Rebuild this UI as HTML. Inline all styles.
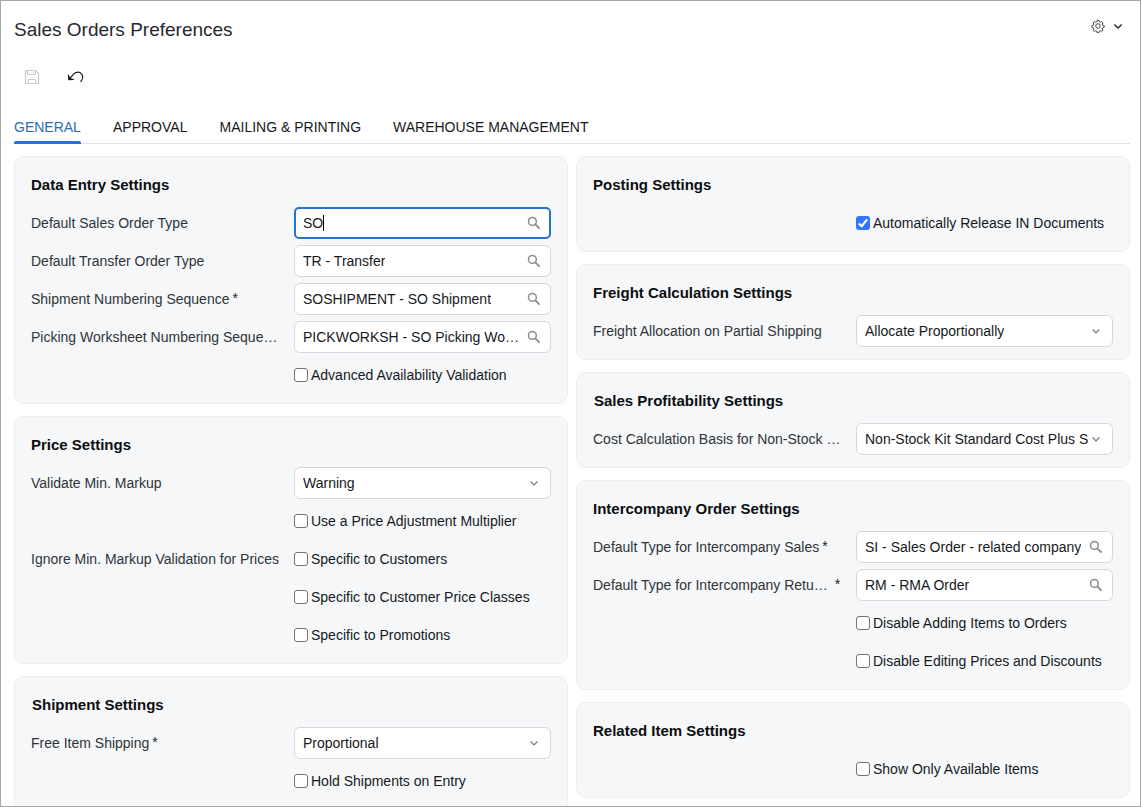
<!DOCTYPE html>
<html><head><meta charset="utf-8"><title>Sales Orders Preferences</title>
<style>
*{box-sizing:border-box;margin:0;padding:0}
html,body{width:1141px;height:807px;overflow:hidden;background:#fff}
body{font-family:"Liberation Sans",sans-serif;font-size:14px;color:#1f2328;position:relative}
#frame{position:absolute;left:0;top:0;width:1141px;height:807px;border:1px solid #a6a6a6;pointer-events:none;z-index:10}
#clip{position:absolute;left:0;top:0;width:1141px;height:806px;overflow:hidden}
h1{position:absolute;left:14px;top:19px;font-size:19px;font-weight:normal;line-height:22px;color:#25292e;white-space:nowrap}
.tab{position:absolute;top:119px;font-size:14px;line-height:16px;color:#16191c;white-space:nowrap}
.tab.act{color:#2a6ebb}
#tabline{position:absolute;left:14px;top:143px;width:1116px;height:1px;background:#dfe1e4}
#tabbar{position:absolute;left:14px;top:141px;width:67px;height:3px;background:#2374cb;border-radius:2px 2px 0 0}
.panel{position:absolute;width:554px;background:#f5f7f9;border:1px solid #eceef0;border-radius:10px;padding:9px 16px 0 16px}
.row{height:38px;display:flex;align-items:center}
.ttl{font-weight:bold;font-size:15px;color:#0c0e10;white-space:nowrap;position:relative;top:-1px}
.lbl{width:263px;flex:none;color:#303438;white-space:nowrap;display:flex;align-items:center}
.req{margin-left:3px;color:#1d2024;position:relative;top:-1px}
.req.far{margin-left:7px}
.inp{width:257px;height:32px;flex:none;background:#fff;border:1px solid #d5d8dc;border-radius:6px;position:relative;display:flex;align-items:center;padding-left:8px}
.inp.focus{border:2px solid #2374cb;padding-left:7px;border-radius:5px}
.inp .v{white-space:nowrap;color:#16191c;overflow:hidden;display:inline-flex;align-items:center}
.caret{display:inline-block;width:1px;height:16px;background:#000;margin-left:0}
.ico{position:absolute}
.ico.s{right:9px;top:8px}
.inp.focus .ico.s{right:8px;top:7px}
.ico.c{right:11px;top:12px}
.cbw{display:flex;align-items:center;white-space:nowrap}
.cb{display:inline-block;width:14px;height:14px;border:1px solid #737373;border-radius:3px;background:#fff;flex:none;margin-right:3px}
.cb.on{border:none;background:#3177fd}
.cb.on svg{display:block}
.cbt{color:#16191c}
</style></head><body>
<div id="clip">
<h1>Sales Orders Preferences</h1>
<svg style="position:absolute;left:24px;top:69px" width="16" height="16" viewBox="0 0 16 16"><path d="M2.5 1.5 H11.5 L14.5 4.5 V13.5 Q14.5 14.5 13.5 14.5 H2.5 Q1.5 14.5 1.5 13.5 V2.5 Q1.5 1.5 2.5 1.5 Z" fill="none" stroke="#cbcbcc" stroke-width="1.2"/><path d="M3.5 1.5 V5.5 H11.5 V1.5" fill="none" stroke="#cbcbcc" stroke-width="1.1"/><path d="M4.5 14.5 V10.5 H11.5 V14.5" fill="none" stroke="#cbcbcc" stroke-width="1.1"/><rect x="8.6" y="2.6" width="1.4" height="1.4" fill="#d6d8da"/></svg>
<svg style="position:absolute;left:66px;top:68px" width="20" height="18" viewBox="0 0 20 18"><path d="M3.2 11.2 L7.6 6.2 C10 3.5 13.6 3.4 15.5 5.8 C17.4 8.3 16.8 11.6 14.4 13.8" fill="none" stroke="#15171a" stroke-width="1.25"/><path d="M2.4 6.8 L2.9 11.6 L7.8 11.3" fill="none" stroke="#15171a" stroke-width="1.25"/><path d="M2.9 11.6 L2.6 8.6 L4.6 9 L6 11.4 Z" fill="#15171a"/></svg>
<svg style="position:absolute;left:1091px;top:18.7px" width="14" height="14" viewBox="0 0 16 16"><g fill="none" stroke="#3a3d41" stroke-width="1.1"><circle cx="8" cy="8" r="2.6"/><path d="M6.9 1.5 h2.2 l.35 1.7 l1.25 .55 l1.5 -.95 l1.55 1.55 l-.95 1.5 l.55 1.25 l1.7 .35 v2.2 l-1.7 .35 l-.55 1.25 l.95 1.5 l-1.55 1.55 l-1.5 -.95 l-1.25 .55 l-.35 1.7 h-2.2 l-.35 -1.7 l-1.25 -.55 l-1.5 .95 l-1.55 -1.55 l.95 -1.5 l-.55 -1.25 l-1.7 -.35 v-2.2 l1.7 -.35 l.55 -1.25 l-.95 -1.5 l1.55 -1.55 l1.5 .95 l1.25 -.55 z" stroke-linejoin="round"/></g></svg>
<svg style="position:absolute;left:1112px;top:22px" width="12" height="9" viewBox="0 0 12 9"><path d="M2.3 2.4 L6 6.1 L9.7 2.4" fill="none" stroke="#24272a" stroke-width="1.4"/></svg>
<div class="tab act" style="left:14px">GENERAL</div>
<div class="tab" style="left:113px">APPROVAL</div>
<div class="tab" style="left:219.5px">MAILING &amp; PRINTING</div>
<div class="tab" style="left:393px">WAREHOUSE MANAGEMENT</div>
<div id="tabline"></div><div id="tabbar"></div>
<div class="panel " style="left:14px;top:156px;height:248px"><div class="row"><div class="ttl">Data Entry Settings</div></div><div class="row"><div class="lbl"><span class="lt">Default Sales Order Type</span></div><div class="inp focus "><span class="v">SO<span class="caret"></span></span><svg class="ico s" viewBox="0 0 14 14" width="14" height="14"><circle cx="5.4" cy="5.4" r="3.9" fill="none" stroke="#8a8d91" stroke-width="1.5"/><path d="M8.3 8.3 L12.6 12.6" stroke="#8a8d91" stroke-width="1.8" fill="none"/></svg></div></div><div class="row"><div class="lbl"><span class="lt">Default Transfer Order Type</span></div><div class="inp "><span class="v">TR - Transfer</span><svg class="ico s" viewBox="0 0 14 14" width="14" height="14"><circle cx="5.4" cy="5.4" r="3.9" fill="none" stroke="#8a8d91" stroke-width="1.5"/><path d="M8.3 8.3 L12.6 12.6" stroke="#8a8d91" stroke-width="1.8" fill="none"/></svg></div></div><div class="row"><div class="lbl"><span class="lt">Shipment Numbering Sequence</span><span class="req">*</span></div><div class="inp "><span class="v">SOSHIPMENT - SO Shipment</span><svg class="ico s" viewBox="0 0 14 14" width="14" height="14"><circle cx="5.4" cy="5.4" r="3.9" fill="none" stroke="#8a8d91" stroke-width="1.5"/><path d="M8.3 8.3 L12.6 12.6" stroke="#8a8d91" stroke-width="1.8" fill="none"/></svg></div></div><div class="row"><div class="lbl"><span class="lt">Picking Worksheet Numbering Seque…</span></div><div class="inp "><span class="v">PICKWORKSH - SO Picking Wo…</span><svg class="ico s" viewBox="0 0 14 14" width="14" height="14"><circle cx="5.4" cy="5.4" r="3.9" fill="none" stroke="#8a8d91" stroke-width="1.5"/><path d="M8.3 8.3 L12.6 12.6" stroke="#8a8d91" stroke-width="1.8" fill="none"/></svg></div></div><div class="row"><div class="lbl"></div><div class="cbw"><span class="cb"></span><span class="cbt">Advanced Availability Validation</span></div></div></div><div class="panel " style="left:14px;top:416px;height:248px"><div class="row"><div class="ttl">Price Settings</div></div><div class="row"><div class="lbl"><span class="lt">Validate Min. Markup</span></div><div class="inp "><span class="v">Warning</span><svg class="ico c" viewBox="0 0 10 7" width="10" height="7"><path d="M1.6 1.5 L5 5 L8.4 1.5" stroke="#76797d" stroke-width="1.2" fill="none"/></svg></div></div><div class="row"><div class="lbl"></div><div class="cbw"><span class="cb"></span><span class="cbt">Use a Price Adjustment Multiplier</span></div></div><div class="row"><div class="lbl"><span class="lt">Ignore Min. Markup Validation for Prices</span></div><div class="cbw"><span class="cb"></span><span class="cbt">Specific to Customers</span></div></div><div class="row"><div class="lbl"></div><div class="cbw"><span class="cb"></span><span class="cbt">Specific to Customer Price Classes</span></div></div><div class="row"><div class="lbl"></div><div class="cbw"><span class="cb"></span><span class="cbt">Specific to Promotions</span></div></div></div><div class="panel " style="left:14px;top:676px;height:200px"><div class="row"><div class="ttl" style="left:1px">Shipment Settings</div></div><div class="row"><div class="lbl"><span class="lt">Free Item Shipping</span><span class="req">*</span></div><div class="inp "><span class="v">Proportional</span><svg class="ico c" viewBox="0 0 10 7" width="10" height="7"><path d="M1.6 1.5 L5 5 L8.4 1.5" stroke="#76797d" stroke-width="1.2" fill="none"/></svg></div></div><div class="row"><div class="lbl"></div><div class="cbw"><span class="cb"></span><span class="cbt">Hold Shipments on Entry</span></div></div></div>
<div class="panel r" style="left:576px;top:156px;height:96px"><div class="row"><div class="ttl">Posting Settings</div></div><div class="row"><div class="lbl"></div><div class="cbw"><span class="cb on"><svg viewBox="0 0 13 13" width="14" height="14"><path d="M2.6 6.9 L5.3 9.5 L10.4 3.2" stroke="#fff" stroke-width="2" fill="none"/></svg></span><span class="cbt">Automatically Release IN Documents</span></div></div></div><div class="panel r" style="left:576px;top:264px;height:96px"><div class="row"><div class="ttl">Freight Calculation Settings</div></div><div class="row"><div class="lbl"><span class="lt">Freight Allocation on Partial Shipping</span></div><div class="inp "><span class="v">Allocate Proportionally</span><svg class="ico c" viewBox="0 0 10 7" width="10" height="7"><path d="M1.6 1.5 L5 5 L8.4 1.5" stroke="#76797d" stroke-width="1.2" fill="none"/></svg></div></div></div><div class="panel r" style="left:576px;top:372px;height:96px"><div class="row"><div class="ttl" style="left:1px">Sales Profitability Settings</div></div><div class="row"><div class="lbl"><span class="lt">Cost Calculation Basis for Non-Stock …</span></div><div class="inp tight"><span class="v">Non-Stock Kit Standard Cost Plus S</span><svg class="ico c" viewBox="0 0 10 7" width="10" height="7"><path d="M1.6 1.5 L5 5 L8.4 1.5" stroke="#76797d" stroke-width="1.2" fill="none"/></svg></div></div></div><div class="panel r" style="left:576px;top:480px;height:210px"><div class="row"><div class="ttl">Intercompany Order Settings</div></div><div class="row"><div class="lbl"><span class="lt">Default Type for Intercompany Sales</span><span class="req">*</span></div><div class="inp "><span class="v">SI - Sales Order - related company</span><svg class="ico s" viewBox="0 0 14 14" width="14" height="14"><circle cx="5.4" cy="5.4" r="3.9" fill="none" stroke="#8a8d91" stroke-width="1.5"/><path d="M8.3 8.3 L12.6 12.6" stroke="#8a8d91" stroke-width="1.8" fill="none"/></svg></div></div><div class="row"><div class="lbl"><span class="lt">Default Type for Intercompany Retu…</span><span class="req far">*</span></div><div class="inp "><span class="v">RM - RMA Order</span><svg class="ico s" viewBox="0 0 14 14" width="14" height="14"><circle cx="5.4" cy="5.4" r="3.9" fill="none" stroke="#8a8d91" stroke-width="1.5"/><path d="M8.3 8.3 L12.6 12.6" stroke="#8a8d91" stroke-width="1.8" fill="none"/></svg></div></div><div class="row"><div class="lbl"></div><div class="cbw"><span class="cb"></span><span class="cbt">Disable Adding Items to Orders</span></div></div><div class="row"><div class="lbl"></div><div class="cbw"><span class="cb"></span><span class="cbt">Disable Editing Prices and Discounts</span></div></div></div><div class="panel r" style="left:576px;top:702px;height:96px"><div class="row"><div class="ttl">Related Item Settings</div></div><div class="row"><div class="lbl"></div><div class="cbw"><span class="cb"></span><span class="cbt">Show Only Available Items</span></div></div></div>
</div>
<div id="frame"></div>
</body></html>
